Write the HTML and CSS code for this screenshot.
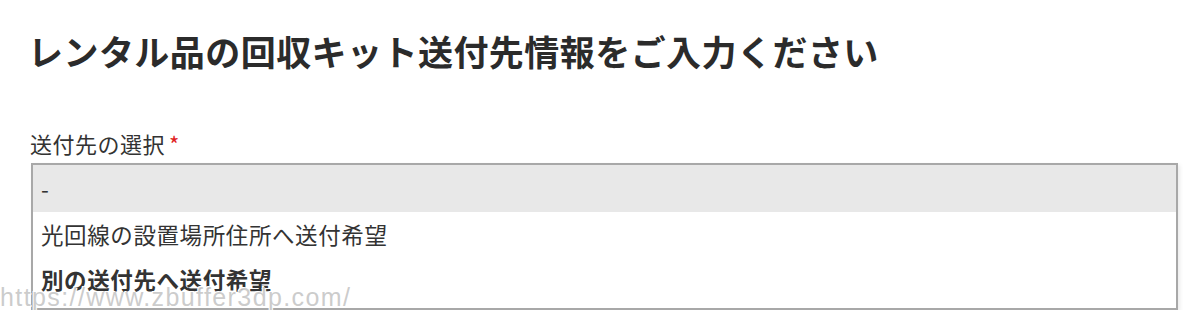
FILE: index.html
```html
<!DOCTYPE html>
<html lang="ja">
<head>
	<meta charset="utf-8">
	<title>回収キット送付先情報</title>
	<meta name="viewport" content="width=device-width,initial-scale=1.0" />
	<link rel="stylesheet" href="styles.css">
</head>
<body>
	<div class="page">
		<h1 class="title">レンタル品の回収キット送付先情報をご入力ください</h1>
		<div class="field">
			<div class="label">送付先の選択<span class="req">*</span></div>
			<div class="list">
				<div class="opt selected">-</div>
				<div class="opt">光回線の設置場所住所へ送付希望</div>
				<div class="opt bold">別の送付先へ送付希望</div>
			</div>
		</div>
	</div>
	<div class="mark">https://www.zbuffer3dp.com/</div>
</body>
</html>
```
FILE: styles.css
```css
body {
	margin: 0;
	padding: 0;
	background-color: #ffffff;
	color: #333333;
	font-family: "Noto Sans CJK JP", "Noto Sans", sans-serif;
}
.page {
	padding: 0 22px 0 31px;
}
.title {
	margin: 0 0 0 -3px;
	padding-top: 23px;
	font-size: 35px;
	line-height: 56px;
	letter-spacing: 0.45px;
	font-weight: bold;
	color: #2b2b2b;
}
.field {
	margin-top: 49px;
}
.label {
	font-size: 22px;
	line-height: 30px;
	height: 35px;
	letter-spacing: 0.5px;
	margin-left: -1px;
}
.req {
	color: #e02020;
	margin-left: 4px;
}
.list {
	border: 2px solid #a8a8a8;
	box-shadow: 2px 2px 4px rgba(0, 0, 0, 0.08);
	height: 143px;
	overflow: hidden;
}
.opt {
	height: 46px;
	line-height: 44px;
	padding-left: 8px;
	font-size: 22.5px;
	letter-spacing: 0.6px;
}
.opt.selected {
	background-color: #e8e8e8;
	height: 47px;
	line-height: 47px;
}
.bold {
	font-weight: bold;
	line-height: 42px;
}
.mark {
	position: absolute;
	left: 0;
	top: 285px;
	font-family: "Liberation Sans", sans-serif;
	font-size: 25px;
	line-height: 25px;
	letter-spacing: 1.4px;
	color: rgba(190, 190, 190, 0.8);
	text-shadow: 1px 1px 0 #fff, -1px -1px 0 #fff;
}
```
